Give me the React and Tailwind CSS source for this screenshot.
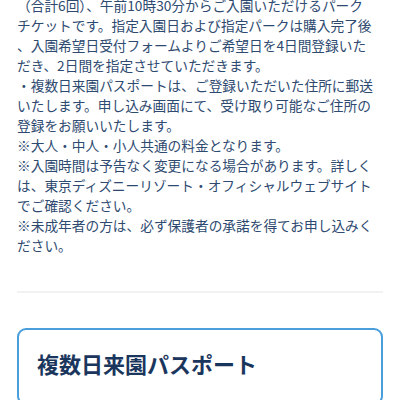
import React from "react";

// notes block for the multi-day pass, kept to the same line breaks as the printed copy
const NOTES = [
  "（合計6回）、午前10時30分からご入園いただけるパーク",
  "チケットです。指定入園日および指定パークは購入完了後",
  "、入園希望日受付フォームよりご希望日を4日間登録いた",
  "だき、2日間を指定させていただきます。",
  "・複数日来園パスポートは、ご登録いただいた住所に郵送",
  "いたします。申し込み画面にて、受け取り可能なご住所の",
  "登録をお願いいたします。",
  "※大人・中人・小人共通の料金となります。",
  "※入園時間は予告なく変更になる場合があります。詳しく",
  "は、東京ディズニーリゾート・オフィシャルウェブサイト",
  "でご確認ください。",
  "※未成年者の方は、必ず保護者の承諾を得てお申し込みく",
  "ださい。",
];

export default function App() {
  return (
    <div
      className="w-[400px] h-[400px] overflow-hidden bg-white px-[17px]"
      style={{ fontFamily: '"Noto Sans CJK JP", "Noto Sans", sans-serif' }}
    >
      <div className="-mt-[5px] text-[13.7px] leading-[20px] text-[#2e4a70] whitespace-nowrap">
        {NOTES.map((line, i) => (
          <p key={i}>{line}</p>
        ))}
      </div>

      <div className="mt-[36px] h-[2px] bg-[#f2f2f2]" />

      <div className="mt-[35px] rounded-[9px] border-2 border-[#4a9edb] px-[18px] pt-[17px] pb-6">
        <h2 className="text-[22px] leading-[32px] font-bold text-[#1b365d]">複数日来園パスポート</h2>
      </div>
    </div>
  );
}
